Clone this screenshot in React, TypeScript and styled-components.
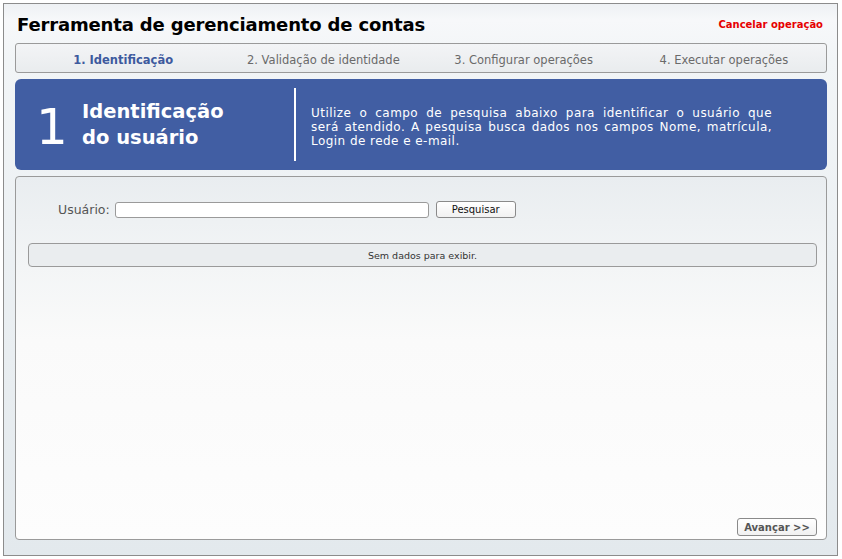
import React from "react";
import styled, { createGlobalStyle } from "styled-components";

const Global = createGlobalStyle`
  html, body { margin: 0; padding: 0; background: #ffffff; }
  body { font-family: "DejaVu Sans", Verdana, sans-serif; }
  #root { width: 842px; height: 559px; }
`;

const Page = styled.div`
  width: 842px;
  height: 559px;
  box-sizing: border-box;
  padding: 3px 4px 3px 3px;
`;

const Frame = styled.div`
  height: 100%;
  box-sizing: border-box;
  border: 1px solid #8c8c8c;
  background: linear-gradient(180deg, #eef1f4 0%, #f7f8fa 3%, #f2f5f7 10%, #e3e9ed 100%);
  padding: 0 10px 15px 11px;
  display: flex;
  flex-direction: column;
`;

const Header = styled.div`
  height: 39px;
  display: flex;
  align-items: center;
  justify-content: space-between;
  padding: 0 4px 0 2px;
`;

const Title = styled.h1`
  margin: 0;
  font-size: 18px;
  font-weight: bold;
  color: #000;
  letter-spacing: -0.15px;
  padding-top: 2px;
`;

const Cancel = styled.a`
  font-size: 10px;
  font-weight: bold;
  color: #e60000;
  cursor: pointer;
  padding-top: 2px;
`;

const Steps = styled.div`
  height: 30px;
  box-sizing: border-box;
  border: 1px solid #9a9a9a;
  border-radius: 3px;
  background: linear-gradient(180deg, #f3f4f6 0%, #e9ecee 100%);
  display: grid;
  grid-template-columns: repeat(4, 1fr);
  align-items: center;
  padding: 3px 2px 0 7px;
`;

const Step = styled.div<{ $active?: boolean }>`
  text-align: center;
  font-size: 11.5px;
  font-weight: ${(p) => (p.$active ? "bold" : "normal")};
  color: ${(p) => (p.$active ? "#3d5a9e" : "#6a6a6a")};
  white-space: nowrap;
`;

const Banner = styled.div`
  margin-top: 6px;
  height: 91px;
  border-radius: 6px;
  background: #415ea3;
  display: flex;
  align-items: center;
  color: #fff;
  padding-left: 21px;
`;

const BigNum = styled.div`
  font-size: 50px;
  font-weight: normal;
  line-height: 1;
  width: 46px;
  padding-top: 4px;
`;

const BannerTitle = styled.div`
  font-size: 19.5px;
  font-weight: bold;
  line-height: 26px;
  width: 212px;
`;

const Divider = styled.div`
  width: 2px;
  height: 73px;
  background: #fff;
  margin-right: 15px;
`;

const BannerText = styled.p`
  margin: 0;
  width: 461px;
  font-size: 12px;
  letter-spacing: 0.45px;
  line-height: 14px;
  text-align: justify;
  text-align-last: left;
  padding-top: 5px;
`;

const Panel = styled.div`
  margin-top: 6px;
  flex: 1;
  border: 1px solid #9a9a9a;
  border-radius: 4px;
  background: linear-gradient(180deg, #e9edf0 0%, #f3f5f6 25%, #fafafa 45%, #fdfdfd 100%);
  display: flex;
  flex-direction: column;
  padding: 0 9px 1px 12px;
`;

const SearchRow = styled.div`
  display: flex;
  align-items: center;
  margin-top: 24px;
  padding-left: 30px;
`;

const Label = styled.label`
  font-size: 12.5px;
  color: #555;
  margin-right: 5px;
`;

const Input = styled.input`
  width: 314px;
  height: 16px;
  box-sizing: border-box;
  border: 1px solid #9a9a9a;
  border-radius: 3px;
  background: #fff;
  padding: 0 3px;
  outline: none;
`;

const Button = styled.button<{ $w: number; $bold?: boolean }>`
  width: ${(p) => p.$w}px;
  height: 17px;
  box-sizing: border-box;
  border: 1px solid #8a8a8a;
  border-radius: 3px;
  background: linear-gradient(180deg, #ffffff 0%, #f1f1f1 100%);
  font-family: "DejaVu Sans", Verdana, sans-serif;
  font-size: 10px;
  font-weight: ${(p) => (p.$bold ? "bold" : "normal")};
  color: ${(p) => (p.$bold ? "#555" : "#111")};
  padding: 0;
  cursor: pointer;
`;

const SearchButton = styled(Button)`
  margin-left: 7px;
`;

const NextButton = styled(Button)`
  height: 18px;
`;

const EmptyRow = styled.div`
  margin-top: 25px;
  height: 24px;
  box-sizing: border-box;
  border: 1px solid #9a9a9a;
  border-radius: 4px;
  background: #eaedef;
  display: flex;
  align-items: center;
  justify-content: center;
  font-size: 9.5px;
  color: #333;
`;

const Footer = styled.div`
  margin-top: auto;
  display: flex;
  justify-content: flex-end;
  padding: 0 0 2px;
`;

export default function App() {
  return (
    <>
      <Global />
      <Page>
        <Frame>
          <Header>
            <Title>Ferramenta de gerenciamento de contas</Title>
            <Cancel>Cancelar operação</Cancel>
          </Header>
          <Steps>
            <Step $active>1. Identificação</Step>
            <Step>2. Validação de identidade</Step>
            <Step>3. Configurar operações</Step>
            <Step>4. Executar operações</Step>
          </Steps>
          <Banner>
            <BigNum>1</BigNum>
            <BannerTitle>
              Identificação
              <br />
              do usuário
            </BannerTitle>
            <Divider />
            <BannerText>
              Utilize o campo de pesquisa abaixo para identificar o usuário que
              será{"\u00a0"}atendido. A pesquisa busca dados nos campos Nome, matrícula, Login de rede
              e e-mail.
            </BannerText>
          </Banner>
          <Panel>
            <SearchRow>
              <Label>Usuário:</Label>
              <Input type="text" />
              <SearchButton $w={80}>Pesquisar</SearchButton>
            </SearchRow>
            <EmptyRow>Sem dados para exibir.</EmptyRow>
            <Footer>
              <NextButton $w={80} $bold>
                Avançar &gt;&gt;
              </NextButton>
            </Footer>
          </Panel>
        </Frame>
      </Page>
    </>
  );
}
